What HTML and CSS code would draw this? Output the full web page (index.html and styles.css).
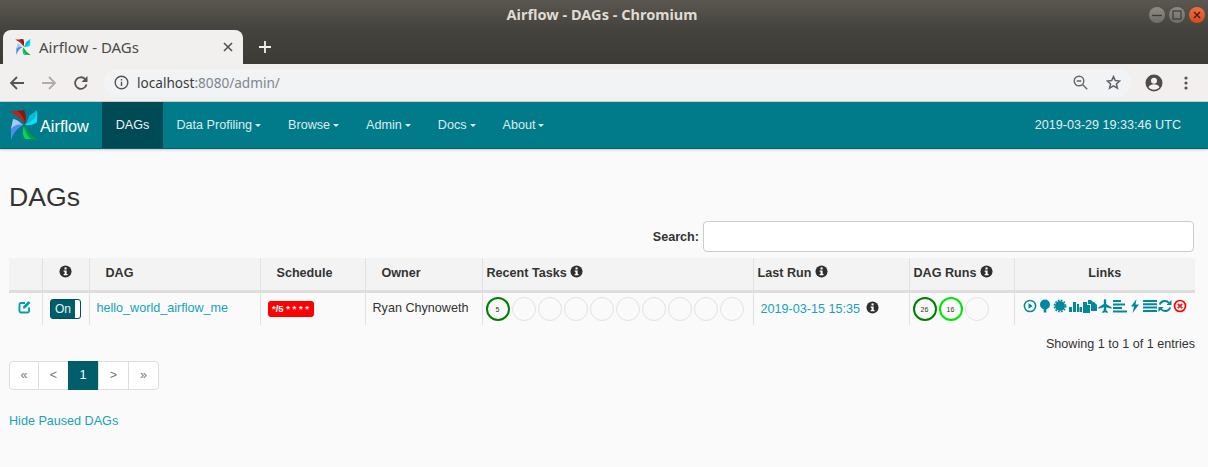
FILE: index.html
```html
<!DOCTYPE html>
<html lang="en">
<head>
  <meta charset="UTF-8">
  <title>Airflow - DAGs</title>
  <link rel="stylesheet" href="styles.css">
</head>
<body>
  <svg class="defs" width="0" height="0">
    <symbol id="pinwheel" viewBox="1 1 29 30">
      <path fill="#c0211a" d="M1 2 L13 2 Q18 5 17 15 Q10 6 1 2Z"/>
      <path fill="#7a1d14" d="M9 2 L16 1 Q19 7 17 15 Q16 6 9 2Z"/>
      <path fill="#00e5ff" d="M29 1 L29 13 Q24 17 17 16 Q26 10 29 1Z"/>
      <path fill="#12b5d6" d="M21 7 L29 1 L27 9 Q22 14 17 16 Q20 12 21 7Z"/>
      <path fill="#00a33a" d="M30 31 L18 30 Q14 25 16 17 Q21 26 30 31Z"/>
      <path fill="#0fd05a" d="M23 30 L17 30 Q13 24 16 17 Q17 25 23 30Z"/>
      <path fill="#4c8de8" d="M3 31 L3 18 Q8 14 15 16 Q6 21 3 31Z"/>
      <path fill="#a9c8f5" d="M3 20 Q8 14 15 16 Q9 10 5 10 Z"/>
    </symbol>
    <symbol id="info" viewBox="0 0 14 14">
      <circle cx="7" cy="7" r="6.5" fill="currentColor"/>
      <rect x="5.9" y="2.6" width="2.3" height="2.2" fill="#fff"/>
      <path fill="#fff" d="M5 6h3.2v3.8H9.2V11H5V9.8h1V7.2H5z"/>
    </symbol>
  </svg>

  <div class="window-bar">
    <div class="window-title">Airflow - DAGs - Chromium</div>
    <div class="window-buttons">
      <span class="win-btn">
        <svg width="10" height="10" viewBox="0 0 10 10"><path d="M0 5.5h10" stroke="#3c3b37" stroke-width="1.3"/></svg>
      </span>
      <span class="win-btn">
        <svg width="10" height="10" viewBox="0 0 10 10"><rect x="1" y="1" width="8" height="8" fill="none" stroke="#3c3b37" stroke-width="1.2"/></svg>
      </span>
      <span class="win-btn win-close">
        <svg width="10" height="10" viewBox="0 0 10 10"><path d="M2 2l6 6M8 2l-6 6" stroke="#4a1c0c" stroke-width="1.4"/></svg>
      </span>
    </div>
    <div class="tab-strip">
      <div class="tab">
        <svg class="tab-icon" width="16" height="16"><use href="#pinwheel"/></svg>
        <span class="tab-title">Airflow - DAGs</span>
        <svg class="tab-close" width="10" height="10" viewBox="0 0 10 10"><path d="M1 1l8 8M9 1l-8 8" stroke="#50504c" stroke-width="1.6"/></svg>
      </div>
      <svg class="new-tab" width="12" height="12" viewBox="0 0 12 12"><path d="M6 0v12M0 6h12" stroke="#f1f0ee" stroke-width="1.8"/></svg>
    </div>
  </div>

  <div class="toolbar">
    <svg class="tool" width="16" height="16" viewBox="0 0 16 16"><path d="M15 8H2M8 2L2 8l6 6" fill="none" stroke="#555" stroke-width="1.8"/></svg>
    <svg class="tool" width="16" height="16" viewBox="0 0 16 16"><path d="M1 8h13M8 2l6 6-6 6" fill="none" stroke="#adadad" stroke-width="1.8"/></svg>
    <svg class="tool" width="16" height="16" viewBox="0 0 16 16"><path d="M13.5 9.5A5.8 5.8 0 1 1 12 4" fill="none" stroke="#555" stroke-width="1.8"/><path d="M14.5 1v6h-6z" fill="#555"/></svg>
    <div class="omnibox">
      <svg width="15" height="15" viewBox="0 0 15 15"><circle cx="7.5" cy="7.5" r="6.3" fill="none" stroke="#555" stroke-width="1.4"/><path d="M7.5 6.7v4.2M7.5 4v1.6" stroke="#555" stroke-width="1.4"/></svg>
      <span class="url"><b>localhost</b>:8080/admin/</span>
      <svg class="omni-zoom" width="15" height="15" viewBox="0 0 15 15"><circle cx="6" cy="6" r="4.8" fill="none" stroke="#666" stroke-width="1.4"/><path d="M3.7 6h4.6M9.6 9.6l4.6 4.6" stroke="#666" stroke-width="1.4"/></svg>
      <svg class="omni-star" width="15" height="15" viewBox="0 0 15 15"><path d="M7.5 1.6l1.8 4 4.3.4-3.2 2.9 1 4.3-3.9-2.3-3.9 2.3 1-4.3L1.400 6l4.300-.4z" fill="none" stroke="#5f6368" stroke-width="1.5"/></svg>
    </div>
    <svg class="account" width="18" height="18" viewBox="0 0 18 18"><circle cx="9" cy="9" r="8.500" fill="#4d4d4d"/><circle cx="9" cy="6.800" r="3" fill="#f2f2f2"/><path d="M3.500 13.300c1-2.200 3.200-3 5.500-3s4.500.8 5.500 3c-1.300 1.600-3.200 2.500-5.500 2.500s-4.200-.9-5.500-2.500z" fill="#f2f2f2"/></svg>
    <svg class="kebab" width="4" height="14" viewBox="0 0 4 14"><circle cx="2" cy="2" r="1.600" fill="#555"/><circle cx="2" cy="7" r="1.600" fill="#555"/><circle cx="2" cy="12" r="1.600" fill="#555"/></svg>
  </div>

  <nav class="navbar">
    <a class="brand">
      <svg width="29" height="30"><use href="#pinwheel"/></svg>
      <span>Airflow</span>
    </a>
    <a class="nav-item active">DAGs</a>
    <a class="nav-item caret">Data Profiling</a>
    <a class="nav-item caret">Browse</a>
    <a class="nav-item caret">Admin</a>
    <a class="nav-item caret">Docs</a>
    <a class="nav-item caret">About</a>
    <span class="clock">2019-03-29 19:33:46 UTC</span>
  </nav>

  <main class="content">
    <h2>DAGs</h2>
    <div class="search-row">
      <label for="search">Search:</label>
      <input id="search" type="text">
    </div>

    <table class="dags">
      <colgroup>
        <col class="c-edit"><col class="c-toggle"><col class="c-dag"><col class="c-schedule"><col class="c-owner">
        <col class="c-tasks"><col class="c-last"><col class="c-runs"><col class="c-links">
      </colgroup>
      <thead>
        <tr>
          <th></th>
          <th class="center"><svg class="info" width="13" height="13"><use href="#info"/></svg></th>
          <th class="indent">DAG</th>
          <th class="indent">Schedule</th>
          <th class="indent">Owner</th>
          <th>Recent Tasks <svg class="info" width="13" height="13"><use href="#info"/></svg></th>
          <th>Last Run <svg class="info" width="13" height="13"><use href="#info"/></svg></th>
          <th>DAG Runs <svg class="info" width="13" height="13"><use href="#info"/></svg></th>
          <th class="center">Links</th>
        </tr>
      </thead>
      <tbody>
        <tr>
          <td class="center">
            <svg class="edit" width="14" height="14" viewBox="0 0 14 14"><path d="M11 7.500V11a1.500 1.500 0 0 1-1.500 1.500H3A1.500 1.500 0 0 1 1.500 11V4.500A1.500 1.500 0 0 1 3 3h4" fill="none" stroke="#00a0b4" stroke-width="1.900"/><path d="M5 6.500L10.500 1l2 2L7 8.500H5z" fill="#00a0b4"/></svg>
          </td>
          <td class="center">
            <span class="toggle"><span class="toggle-on">On</span><span class="toggle-knob"></span></span>
          </td>
          <td class="dag-name"><a>hello_world_airflow_me</a></td>
          <td><span class="cron">*/5 * * * *</span></td>
          <td class="owner"><span>Ryan Chynoweth</span></td>
          <td class="circles-cell">
            <div class="circles">
              <span class="circle success">5</span>
              <span class="circle"></span><span class="circle"></span><span class="circle"></span>
              <span class="circle"></span><span class="circle"></span><span class="circle"></span>
              <span class="circle"></span><span class="circle"></span><span class="circle"></span>
            </div>
          </td>
          <td class="last-run">
            <a>2019-03-15 15:35</a>
            <svg class="info" width="13" height="13"><use href="#info"/></svg>
          </td>
          <td class="circles-cell">
            <div class="circles">
              <span class="circle success">26</span>
              <span class="circle running">16</span>
              <span class="circle"></span>
            </div>
          </td>
          <td>
            <div class="links">
              <svg viewBox="0 0 13 14"><circle cx="6.500" cy="7" r="5.600" fill="none" stroke="#00889c" stroke-width="1.500"/><path d="M5 4.300L9.200 7 5 9.700z" fill="#00889c"/></svg>
              <svg viewBox="0 0 12 14"><circle cx="6" cy="5.500" r="5" fill="#00889c"/><rect x="4.700" y="8" width="2.600" height="5.500" fill="#00889c"/></svg>
              <svg viewBox="0 0 13 14"><circle cx="6.500" cy="7" r="5" fill="#00889c"/><circle cx="6.500" cy="7" r="5.700" fill="none" stroke="#00889c" stroke-width="1.500" stroke-dasharray="1.700 1.300"/></svg>
              <svg viewBox="0 0 14 14"><path d="M1 8h3v5H1zM5 3h3v10H5zM9 5h2v8H9zM11.500 8H14v5h-2.500z" fill="#00889c"/></svg>
              <svg viewBox="0 0 14 14"><path d="M0 3h4v3h3v8H0zM5 1h3l2 2v2H5zM8 5h2V3h1l3 3v6H8z" fill="#00889c"/></svg>
              <svg viewBox="0 0 13 14"><path d="M6.500 0c.8 0 1.200 1 1.200 2v3l5.300 3.300v1.400L7.700 8.200v3l1.500 1.200V14l-2.700-.8-2.700.8v-1.600l1.500-1.200v-3L0 9.700V8.300L5.300 5V2c0-1 .4-2 1.200-2z" fill="#00889c"/></svg>
              <svg viewBox="0 0 14 14"><path d="M0 1h8v2H0zM0 4.500h12v2H0zM0 8h9v2H0zM0 11.500h14v2H0z" fill="#00889c"/></svg>
              <svg viewBox="0 0 10 14"><path d="M6.500 0L1 7.500h3L2.500 14 9 5.500H5.500z" fill="#00889c"/></svg>
              <svg viewBox="0 0 14 14"><path d="M0 1h14v2H0zM0 4.300h14v2H0zM0 7.600h14v2H0zM0 10.900h14v2H0z" fill="#00889c"/></svg>
              <svg viewBox="0 0 14 14"><path d="M1.800 5.500A5.300 5.300 0 0 1 11 4M12.200 8.500A5.300 5.300 0 0 1 3 10" fill="none" stroke="#00889c" stroke-width="1.900"/><path d="M13.500 1v5h-5zM.5 13V8h5z" fill="#00889c"/></svg>
              <svg viewBox="0 0 13 14"><circle cx="6.500" cy="7" r="5.500" fill="none" stroke="#f00" stroke-width="1.700"/><path d="M4.300 4.800l4.400 4.400M8.700 4.800L4.300 9.200" stroke="#e0222a" stroke-width="1.800"/></svg>
            </div>
          </td>
        </tr>
      </tbody>
    </table>

    <div class="entries">Showing 1 to 1 of 1 entries</div>

    <ul class="pager">
      <li>«</li><li>&lt;</li><li class="current">1</li><li>&gt;</li><li>»</li>
    </ul>

    <a class="hide-paused">Hide Paused DAGs</a>
  </main>
</body>
</html>
```

FILE: styles.css
```css
html, body {
  margin: 0;
  height: 467px;
  overflow: hidden;
}

body {
  font-family: "Liberation Sans", Arial, sans-serif;
  font-size: 12.6px;
  color: #333;
  background-color: #fafafa;
}

.defs {
  display: block;
  height: 0;
}

a {
  color: #17a2b8;
}

/* browser window */
.window-bar {
  position: relative;
  height: 64px;
  background: linear-gradient(#5a5750, #45433d 45%, #3d3b36);
}

.window-title {
  height: 30px;
  line-height: 29px;
  padding-right: 4px;
  text-align: center;
  font-family: "Noto Sans", sans-serif;
  font-size: 14.550px;
  font-weight: 700;
  color: #dfdbd2;
}

.window-buttons {
  position: absolute;
  top: 7px;
  right: 3px;
  display: flex;
  gap: 4px;
}

.win-btn {
  width: 16px;
  height: 16px;
  border-radius: 50%;
  background: linear-gradient(#8d8b84, #6f6d66);
  display: flex;
  align-items: center;
  justify-content: center;
}

.win-close {
  background: linear-gradient(#f0703f, #d9481c);
}

.tab-strip {
  display: flex;
  align-items: center;
  padding-left: 3px;
  height: 34px;
}

.tab {
  width: 240px;
  height: 34px;
  box-sizing: border-box;
  background-color: #f1f0ef;
  border-radius: 8px 8px 0 0;
  display: flex;
  align-items: center;
  padding: 0 10px 0 12px;
}

.tab-icon {
  flex: none;
}

.tab-title {
  flex: 1;
  margin-left: 8px;
  font-family: "Noto Sans", sans-serif;
  font-size: 15px;
  color: #4a4a46;
}

.new-tab {
  margin-left: 16px;
}

.toolbar {
  height: 37px;
  background-color: #f1f0ef;
  border-bottom: 1px solid #cfcfcd;
  display: flex;
  align-items: center;
  padding-left: 9px;
}

.tool {
  margin-right: 16px;
}

.omnibox {
  width: 1027px;
  margin-left: -1px;
  height: 28px;
  padding: 0 10px;
  box-sizing: border-box;
  background-color: #f1f3f5;
  border-radius: 14px;
  display: flex;
  align-items: center;
}

.url {
  flex: 1;
  margin-left: 8px;
  font-family: "Noto Sans", sans-serif;
  font-size: 13.6px;
  color: #80868b;
}

.url b {
  font-weight: 400;
  color: #3c3c3c;
}

.omni-zoom {
  margin-right: 18px;
}

.account {
  margin-left: 14px;
}

.kebab {
  margin-left: 21px;
}

/* navbar */
.navbar {
  height: 46px;
  background-color: #017b8a;
  border-bottom: 1px solid #025f6b;
  box-shadow: 0 1px 2px rgba(0, 0, 0, 0.2);
  display: flex;
  align-items: stretch;
  color: #e4eeef;
}

.brand {
  width: 102px;
  display: flex;
  align-items: center;
  padding-left: 9px;
  box-sizing: border-box;
  font-size: 16.300px;
  color: #fff;
}

.brand span {
  margin-left: 2px;
  padding-top: 2px;
}

.nav-item {
  display: flex;
  align-items: center;
  padding: 0 13.500px;
  color: #dcebed;
}

.nav-item.active {
  width: 61px;
  padding: 0;
  justify-content: center;
  background-color: #004a56;
  color: #f2f6f6;
}

.caret::after {
  content: "";
  margin-left: 3px;
  border-top: 3.500px solid #e4eeef;
  border-left: 3.500px solid transparent;
  border-right: 3.500px solid transparent;
}

.clock {
  margin-left: auto;
  margin-right: 27px;
  align-self: center;
}

/* page content */
.content {
  padding: 0 13px 0 9px;
}

h2 {
  margin: 0;
  padding-top: 32px;
  height: 40px;
  font-size: 26.600px;
  line-height: 32px;
  font-weight: 400;
  color: #333;
}

.search-row {
  display: flex;
  align-items: center;
  justify-content: flex-end;
  gap: 4px;
  height: 31px;
  font-weight: 700;
}

.search-row input {
  width: 491px;
  height: 31px;
  box-sizing: border-box;
  margin-right: 1px;
  background-color: #fff;
  border: 1px solid #ccc;
  border-radius: 4px;
}

.dags {
  width: 1186px;
  margin-top: 6px;
  table-layout: fixed;
  border-collapse: collapse;
}

.c-edit { width: 33px; }
.c-toggle { width: 47px; }
.c-dag { width: 171px; }
.c-schedule { width: 105px; }
.c-owner { width: 117px; }
.c-tasks { width: 271px; }
.c-last { width: 156px; }
.c-runs { width: 105px; }
.c-links { width: 181px; }

.dags th {
  height: 33px;
  padding: 0 0 2px 4px;
  box-sizing: border-box;
  text-align: left;
  font-size: 12.6px;
  white-space: nowrap;
  background-color: #f3f3f3;
  border-left: 1px solid #e2e2e2;
  border-bottom: 3px solid #dedede;
}

.dags th:first-child,
.dags td:first-child {
  border-left: 0;
}

.dags th.indent {
  padding-left: 16px;
}

.dags th.center,
.dags td.center {
  padding-left: 0;
  text-align: center;
}

.dags td {
  height: 34px;
  padding: 0 0 0 7px;
  box-sizing: border-box;
  border-left: 1px solid #e2e2e2;
  white-space: nowrap;
}

.info {
  color: #2f2f2f;
  vertical-align: -1px;
}

.edit {
  display: block;
  margin: 0 auto 4px;
}

.toggle {
  display: inline-flex;
  width: 31px;
  height: 20px;
  box-sizing: border-box;
  border: 1px solid #00505c;
  border-radius: 3px;
  overflow: hidden;
  vertical-align: middle;
  background-color: #005e6b;
}

.toggle-on {
  flex: 1;
  line-height: 18px;
  text-align: center;
  font-size: 12px;
  color: #e8f2f3;
}

.toggle-knob {
  width: 5px;
  background-color: #fff;
}

.dag-name a {
  position: relative;
  top: -1px;
}

.cron {
  display: inline-block;
  width: 46px;
  height: 16px;
  line-height: 16px;
  text-align: center;
  border-radius: 3px;
  background-color: #f00;
  color: #fff;
  font-size: 9.500px;
  font-weight: 700;
  vertical-align: 2px;
}

.owner span {
  position: relative;
  top: -1px;
}

.dags td.circles-cell {
  padding-left: 3px;
}

.circles {
  display: flex;
  gap: 2px;
}

.circle {
  width: 24px;
  height: 24px;
  box-sizing: border-box;
  border: 1.300px solid #e2e2e2;
  border-radius: 50%;
  font-size: 7px;
  line-height: 21px;
  text-align: center;
  color: #333;
}

.circle.success {
  border: 2px solid #008000;
}

.circle.running {
  border: 2px solid #00e600;
}

.dags td.last-run {
  padding-left: 7px;
}

.last-run a {
  margin-right: 3px;
}

.links {
  display: flex;
  gap: 1px;
  align-items: center;
  padding-left: 1px;
  padding-bottom: 5px;
}

.links svg {
  width: 14px;
  height: 14px;
  flex: none;
}

.entries {
  margin-top: 12px;
  text-align: right;
  line-height: 15px;
}

.pager {
  list-style: none;
  display: inline-flex;
  margin: 9px 0 0;
  padding: 0;
  height: 29px;
  box-sizing: border-box;
  border: 1px solid #ddd;
  border-radius: 4px;
  background-color: #fff;
  color: #777;
}

.pager li {
  width: 29px;
  line-height: 27px;
  text-align: center;
  border-left: 1px solid #ddd;
}

.pager li:first-child {
  width: 28px;
  border-left: 0;
}

.pager li.current {
  width: 30px;
  margin: -1px 0;
  line-height: 29px;
  height: 29px;
  background-color: #005e6b;
  border-left: 0;
  color: #fff;
}

.hide-paused {
  display: block;
  margin-top: 24px;
  line-height: 15px;
}
```
